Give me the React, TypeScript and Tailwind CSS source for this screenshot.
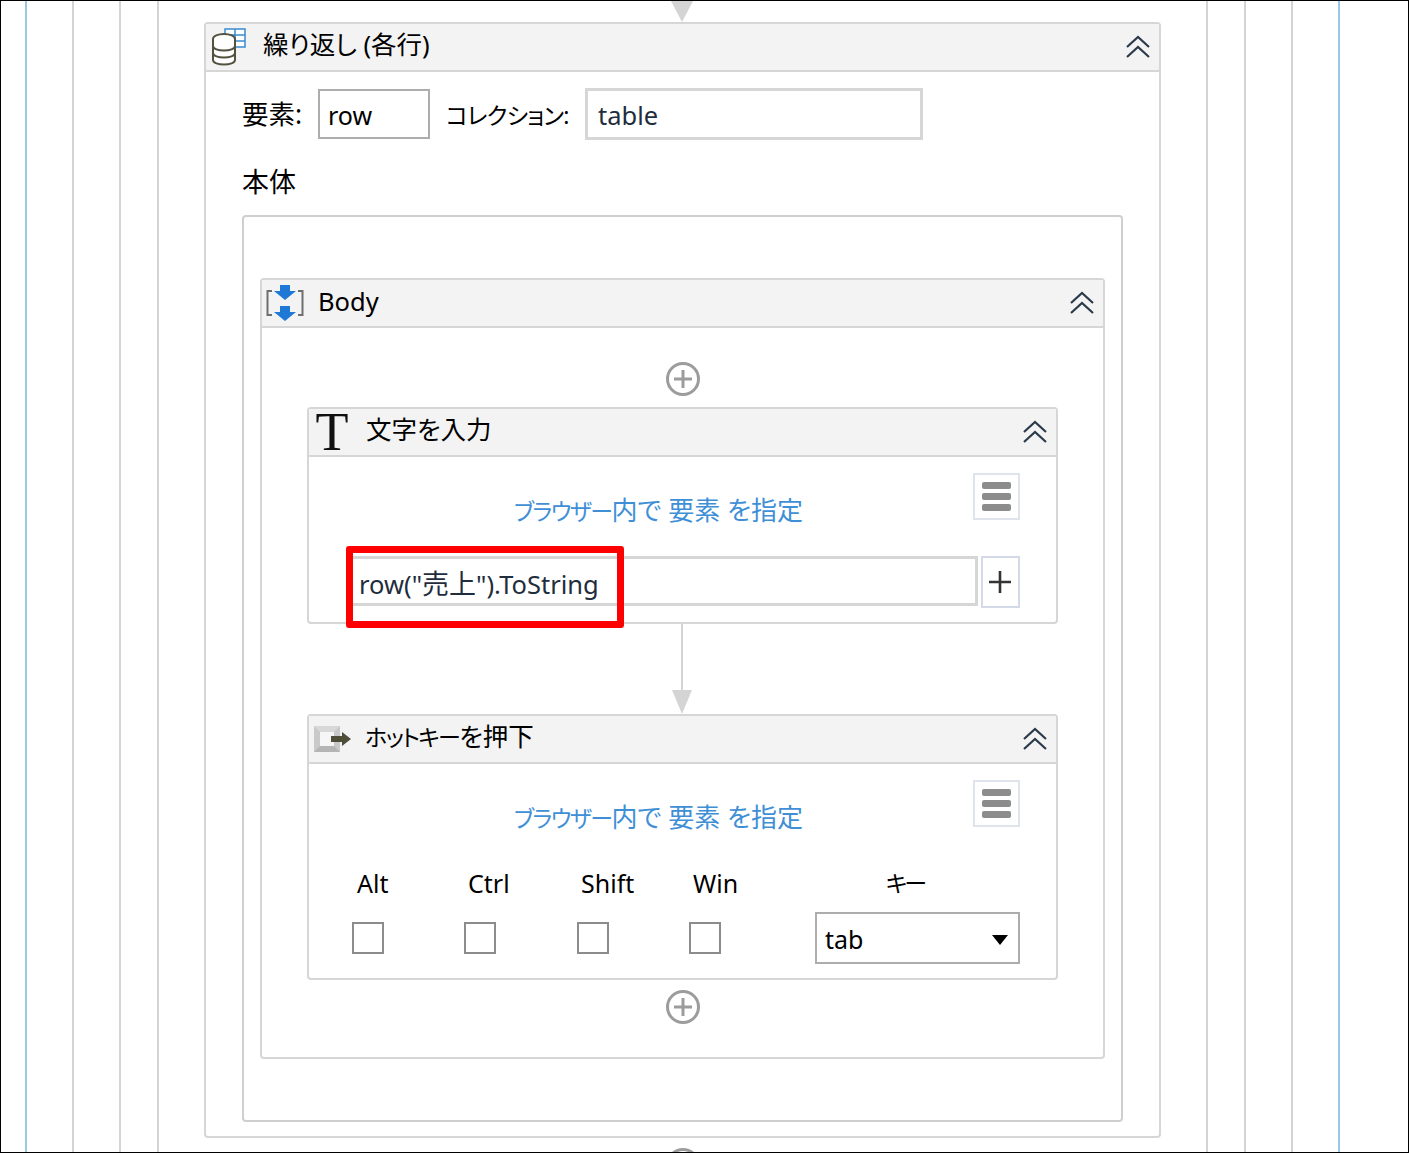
const FONT = "font-['Noto_Sans','Noto_Sans_CJK_JP',sans-serif] [font-feature-settings:'palt']";

function Chevrons() {
  return (
    <svg width="26" height="24" viewBox="0 0 26 24" fill="none" stroke="#2b3a4a" strokeWidth="2.2">
      <path d="M2 12 L13 2 L24 12" />
      <path d="M2 22 L13 12 L24 22" />
    </svg>
  );
}

function PlusCircle() {
  return (
    <svg width="36" height="36" viewBox="0 0 36 36" fill="none" stroke="#9c9c9c" strokeWidth="3">
      <circle cx="18" cy="18" r="15.5" />
      <path d="M18 9 V27 M9 18 H27" />
    </svg>
  );
}

function Arrow() {
  return (
    <svg width="20" height="24" viewBox="0 0 20 24" className="block">
      <path d="M0 0 H20 L10 24 Z" fill="#d4d4d4" />
    </svg>
  );
}

function DbIcon() {
  return (
    <svg width="36" height="38" viewBox="0 0 36 38" fill="none">
      <path d="M14 1 H34 V19 H14 Z M24 1 V19 M14 7 H34 M14 13 H34" stroke="#3a8ccf" strokeWidth="1.5" fill="#fff" />
      <ellipse cx="13" cy="11" rx="11" ry="5" fill="#fff" stroke="#54523e" strokeWidth="2" />
      <path d="M2 11 V32 C2 38 24 38 24 32 V11" fill="#fff" stroke="#54523e" strokeWidth="2" />
      <path d="M2 18 C2 24 24 24 24 18 M2 25 C2 31 24 31 24 25" stroke="#54523e" strokeWidth="2" />
    </svg>
  );
}

function BodyIcon() {
  return (
    <svg width="38" height="36" viewBox="0 0 38 36" fill="none">
      <path d="M6 6 H1.5 V30 H6 M32 6 H36.5 V30 H32" stroke="#6f6f6f" strokeWidth="2" />
      <path d="M14 0 H24 V6 H30 L19 15 L8 6 H14 Z M14 21 H24 V27 H30 L19 36 L8 27 H14 Z" fill="#1f78d6" />
    </svg>
  );
}

function KeyIcon() {
  return (
    <svg width="38" height="28" viewBox="0 0 38 28">
      <rect x="0" y="1" width="26" height="26" fill="#c9c9c9" />
      <path d="M0 1 L6 7 H20 L26 1 Z" fill="#d8d8d8" />
      <path d="M0 27 L6 21 H20 L26 27 Z" fill="#b5b5b5" />
      <rect x="6" y="7" width="14" height="14" fill="#f6f6f6" />
      <path d="M17 11 H28 V7 L37 14 L28 21 V17 H17 Z" fill="#4f4e38" />
    </svg>
  );
}

function CardHeader({ icon, title, iconWidth, titleClass = "pb-[4px]" }: { icon: React.ReactNode; title: React.ReactNode; iconWidth: string; titleClass?: string }) {
  return (
    <div className="flex h-[48px] items-center border-b-2 border-[#d6d6d6] bg-[#f3f3f3] pr-[8px]">
      <div className={`flex shrink-0 items-center justify-center ${iconWidth}`}>{icon}</div>
      <span className={`text-[25.5px] leading-none text-black ${titleClass}`}>{title}</span>
      <span className="ml-auto flex items-center"><Chevrons /></span>
    </div>
  );
}

function MenuButton() {
  return (
    <div className="flex h-[47px] w-[47px] flex-col items-center justify-center gap-[4px] border-2 border-[#dfe3ec] bg-white">
      <div className="h-[7px] w-[29px] rounded-[2px] bg-[#8c8c8c]" />
      <div className="h-[7px] w-[29px] rounded-[2px] bg-[#8c8c8c]" />
      <div className="h-[7px] w-[29px] rounded-[2px] bg-[#8c8c8c]" />
    </div>
  );
}

function BrowserRow() {
  return (
    <div className="relative flex h-[47px] justify-end pr-[36px]">
      <span className="absolute left-[205px] top-[18px] text-[26px] leading-[38px] whitespace-nowrap text-[#3f8fd6]">
        <span className="text-[23px] tracking-[-1.6px]">ブラウザー</span>内で 要素 を指定
      </span>
      <MenuButton />
    </div>
  );
}

function Check() {
  return <div className="h-[32px] w-[32px] border-2 border-[#8c8c8c] bg-white" />;
}

function ModKey({ label, width, labelPad }: { label: string; width: string; labelPad: string }) {
  return (
    <div className={`flex flex-col ${width}`}>
      <span className={`h-[58px] text-[25px] leading-[38px] text-black ${labelPad}`}>{label}</span>
      <Check />
    </div>
  );
}

function Frame({ className, children }: { className: string; children: React.ReactNode }) {
  return <div className={`h-full border-x-2 ${className}`}>{children}</div>;
}

export default function App() {
  return (
    <div className={`h-[1153px] w-[1409px] overflow-hidden border border-black bg-white ${FONT}`}>
      <Frame className="ml-[24px] w-[1315px] border-[#9cc8e8]">
        <Frame className="ml-[45px] w-[1221px] border-[#d4d4d4]">
          <Frame className="ml-[45px] w-[1127px] border-[#d4d4d4]">
            <Frame className="ml-[36px] w-[1051px] border-[#d4d4d4]">
              <div className="ml-[45px] flex w-[957px] flex-col">
                <div className="flex h-[21px] justify-center pr-[1px]">
                  <svg width="22" height="21" viewBox="0 0 22 21"><path d="M0 0 H22 L11 21 Z" fill="#d4d4d4" /></svg>
                </div>
                <div className="flex h-[1116px] flex-col rounded-[4px] border-2 border-[#d6d6d6]">
                  <CardHeader icon={<DbIcon />} title="繰り返し (各行)" iconWidth="w-[57px] pr-[12px]" />
                  <div className="flex flex-col px-[36px]">
                    <div className="mt-[16px] flex h-[52px] items-center text-[25px] text-black">
                      <span className="w-[76px] text-[26.5px] leading-none">要素:</span>
                      <div className="flex h-[50px] w-[112px] items-center border-2 border-[#adadad] pl-[8px] pt-[2px] leading-none">row</div>
                      <span className="ml-[16px] w-[139px] text-[23px] leading-none tracking-[-0.7px] whitespace-nowrap pt-[2px]">コレクション:</span>
                      <div className="flex h-[52px] w-[338px] items-center border-[3px] border-[#d6d6d6] pl-[10px] pt-[4px] text-[25.5px] leading-none text-[#1f2d3d]">table</div>
                    </div>
                    <span className="mt-[23px] text-[27px] leading-[38px] text-black">本体</span>
                    <div className="mt-[14px] flex h-[907px] flex-col rounded-[4px] border-2 border-[#cfcfcf] px-[16px] pt-[61px]">
                      <div className="flex h-[781px] flex-col rounded-[4px] border-2 border-[#d6d6d6]">
                        <CardHeader icon={<BodyIcon />} title="Body" iconWidth="w-[56px] pr-[10px]" titleClass="pb-[2px]" />
                        <div className="flex flex-col px-[45px]">
                          <div className="mt-[33px] flex h-[36px] justify-center pl-[1px]"><PlusCircle /></div>
                          <div className="mt-[10px] flex h-[217px] flex-col rounded-[4px] border-2 border-[#d6d6d6]">
                            <CardHeader
                              icon={<span className="font-['Liberation_Serif',serif] text-[54px] leading-none text-[#111]">T</span>}
                              title="文字を入力"
                              iconWidth="w-[57px] pr-[11px]"
                            />
                            <div className="pt-[16px]"><BrowserRow /></div>
                            <div className="relative mt-[36px] flex h-[52px] pl-[40px] pr-[36px]">
                              <div className="flex h-[50px] w-[630px] items-center border-[3px] border-[#d6d6d6] pl-[7px] pt-[6px] text-[25.5px] whitespace-nowrap text-[#1f2d3d]">row("<span className="text-[27px]">売上</span>").ToString</div>
                              <div className="ml-[3px] flex h-[52px] w-[39px] items-center justify-center border-2 border-[#d3d9e6] bg-white pr-[1px]">
                                <svg width="22" height="22" viewBox="0 0 22 22" stroke="#333" strokeWidth="2.6"><path d="M11 0 V22 M0 11 H22" /></svg>
                              </div>
                              <div className="absolute left-[37px] top-[-10px] h-[82px] w-[278px] rounded-[3px] border-[7px] border-[#ff0000]" />
                            </div>
                          </div>
                          <div className="flex flex-col items-center pr-[2px]">
                            <div className="h-[66px] w-[2px] bg-[#d4d4d4]" />
                            <Arrow />
                          </div>
                          <div className="flex h-[266px] flex-col rounded-[4px] border-2 border-[#d6d6d6]">
                            <CardHeader
                              icon={<KeyIcon />}
                              title={<><span className="text-[23px] tracking-[-1.6px]">ホットキー</span>を押下</>}
                              iconWidth="w-[56px] pr-[9px]"
                            />
                            <div className="pt-[16px]"><BrowserRow /></div>
                            <div className="mt-[37px] flex pl-[43px] pr-[36px]">
                              <ModKey label="Alt" width="w-[112px]" labelPad="pl-[5px]" />
                              <ModKey label="Ctrl" width="w-[113px]" labelPad="pl-[4px]" />
                              <ModKey label="Shift" width="w-[112px]" labelPad="pl-[4px]" />
                              <ModKey label="Win" width="w-[126px]" labelPad="pl-[4px]" />
                              <div className="flex flex-1 flex-col items-end">
                                <span className="h-[48px] pr-[96px] text-[23px] leading-[38px] tracking-[-3px] text-black">キー</span>
                                <div className="flex h-[52px] w-[205px] items-center justify-between border-2 border-[#adadad] pl-[8px] pr-[10px] pt-[3px] text-[25px] text-black">
                                  <span>tab</span>
                                  <svg width="16" height="10" viewBox="0 0 16 10"><path d="M0 0 H16 L8 10 Z" fill="#000" /></svg>
                                </div>
                              </div>
                            </div>
                          </div>
                          <div className="mt-[9px] flex h-[36px] justify-center pl-[1px]"><PlusCircle /></div>
                        </div>
                      </div>
                    </div>
                  </div>
                </div>
                <div className="mt-[9px] flex justify-center"><PlusCircle /></div>
              </div>
            </Frame>
          </Frame>
        </Frame>
      </Frame>
    </div>
  );
}
